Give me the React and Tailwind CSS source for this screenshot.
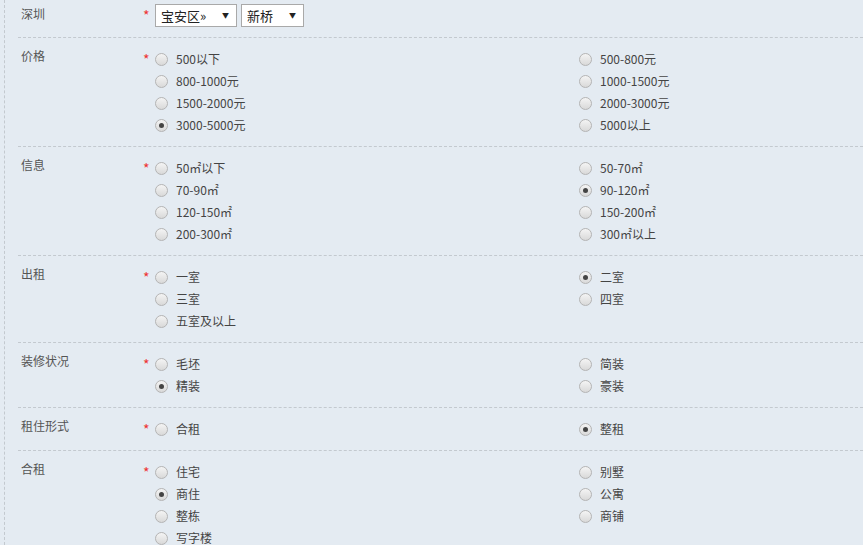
import React from 'react';

const sections = [
    {
        label: '价格',
        options: ['500以下', '500-800元', '800-1000元', '1000-1500元', '1500-2000元', '2000-3000元', '3000-5000元', '5000以上'],
        checked: '3000-5000元',
    },
    {
        label: '信息',
        options: ['50㎡以下', '50-70㎡', '70-90㎡', '90-120㎡', '120-150㎡', '150-200㎡', '200-300㎡', '300㎡以上'],
        checked: '90-120㎡',
    },
    {
        label: '出租',
        options: ['一室', '二室', '三室', '四室', '五室及以上'],
        checked: '二室',
    },
    {
        label: '装修状况',
        options: ['毛坯', '简装', '精装', '豪装'],
        checked: '精装',
    },
    {
        label: '租住形式',
        options: ['合租', '整租'],
        checked: '整租',
    },
    {
        label: '合租',
        options: ['住宅', '别墅', '商住', '公寓', '整栋', '商铺', '写字楼'],
        checked: '商住',
    },
];

const Radio = ({ on }) => (
    <span className="relative inline-flex w-[13px] h-[13px] shrink-0 rounded-full border border-[#b4b4b4] bg-gradient-to-b from-[#f4f4f4] to-[#d9d9d9] items-center justify-center">
        {on && <span className="w-[5px] h-[5px] rounded-full bg-[#444]" />}
    </span>
);

const Select = ({ value, width }) => (
    <div className={`flex items-center justify-between h-[23px] bg-white border border-[#a9a9a9] pl-[5px] pr-[7px] ${width}`}>
        <span className="text-[13px] text-[#222]">{value}</span>
        <span className="text-[7px] text-[#222]">▼</span>
    </div>
);

const Star = () => (
    <div className="w-[14px] shrink-0 text-[#e33] text-[14px] leading-[14px] pl-[2px] pt-[4px]">*</div>
);

export default function App() {
    return (
        <div
            className="w-full h-[545px] overflow-hidden bg-[#e4ebf2] text-[12px] text-[#444]"
            style={{ fontFamily: '"Noto Sans CJK SC", "Noto Sans", sans-serif' }}
        >
            <div className="ml-[4px] h-full border-l border-dashed border-[#c3c9cf] pl-[13px]">
                {/* city / district */}
                <div className="flex pt-[4px] pb-[10px]">
                    <div className="w-[123px] shrink-0 pl-[3px] pt-[2px] leading-[16px] text-[#555]">深圳</div>
                    <Star />
                    <div className="flex gap-[4px]">
                        <Select value="宝安区»" width="w-[82px]" />
                        <Select value="新桥" width="w-[63px]" />
                    </div>
                </div>

                {sections.map((s) => (
                    <div key={s.label} className="flex border-t border-dashed border-[#c3c9cf] pt-[10px] pb-[10px]">
                        <div className="w-[123px] shrink-0 pl-[3px] leading-[16px] text-[#555]">{s.label}</div>
                        <Star />
                        <div className="grid grid-cols-[424px_424px] shrink-0">
                            {s.options.map((o) => (
                                <label key={o} className="flex items-center gap-[8px] h-[22px]">
                                    <Radio on={o === s.checked} />
                                    <span>{o}</span>
                                </label>
                            ))}
                        </div>
                    </div>
                ))}
            </div>
        </div>
    );
}
